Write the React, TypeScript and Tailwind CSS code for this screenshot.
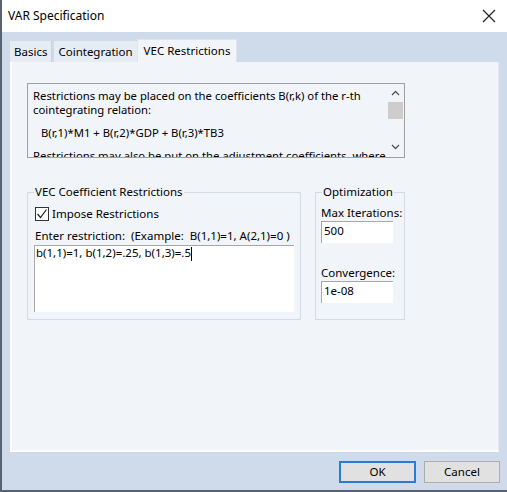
import React from "react";

export default function App() {
  const font = { fontFamily: '"Noto Sans", "DejaVu Sans", sans-serif' };
  return (
    <div className="w-[507px] h-[492px] bg-[#4a5260] p-0 overflow-hidden" style={font}>
      <div className="w-[507px] h-[492px] border-l-[2px] border-b-[2px] border-[#5a6272] bg-[#cfdbeb] flex flex-col text-[11.5px] text-black leading-none">
        {/* Title bar */}
        <div className="h-[32px] bg-white flex items-center justify-between pl-[6px] pr-[10px] shrink-0">
          <span className="text-[12px]">VAR Specification</span>
          <svg width="14" height="14" viewBox="0 0 14 14" className="mr-[1px]">
            <path d="M1 1 L13 13 M13 1 L1 13" stroke="#222" strokeWidth="1.2" />
          </svg>
        </div>
        {/* Tabs */}
        <div className="flex items-end pl-[8px] h-[30px] shrink-0">
          <div className="h-[21px] px-[4px] flex items-center bg-[#e6ecf4] border-r border-[#c8d2de]">Basics</div>
          <div className="h-[21px] px-[4px] ml-[2px] flex items-center bg-[#e6ecf4]">Cointegration</div>
          <div className="h-[23px] px-[6px] flex items-center bg-[#f1f4f9] border-t border-x border-[#dfe5ee]">VEC Restrictions</div>
        </div>
        <div className="mx-[8px] h-[390px] shrink-0 bg-[#f1f4f9] border-l-[2px] border-b-[2px] border-white border-r border-r-[#e4e9f0] pt-[21px] pl-[15px] pr-[91px]">
          {/* Scroll text */}
          <div className="w-[378px] h-[75px] border border-[#a0a0a0] bg-[#f1f4f9] flex overflow-hidden">
            <div className="flex-1 pl-[5px] pt-[5px] leading-[14px] overflow-hidden text-[11.3px] whitespace-nowrap">
              <div>Restrictions may be placed on the coefficients B(r,k) of the r-th</div>
              <div>cointegrating relation:</div>
              <div className="mt-[9px] pl-[8px]">B(r,1)*M1 + B(r,2)*GDP + B(r,3)*TB3</div>
              <div className="mt-[9px]">Restrictions may also be put on the adjustment coefficients, where</div>
            </div>
            <div className="w-[17px] flex flex-col items-center bg-[#f1f4f9]">
              <svg width="9" height="6" viewBox="0 0 9 6" className="mt-[6px]">
                <path d="M1 5 L4.5 1.5 L8 5" stroke="#555" strokeWidth="1.3" fill="none" />
              </svg>
              <div className="w-[15px] h-[17px] bg-[#cdcdcd] mt-[6px]" />
              <div className="flex-1" />
              <svg width="9" height="6" viewBox="0 0 9 6" className="mb-[7px]">
                <path d="M1 1 L4.5 4.5 L8 1" stroke="#555" strokeWidth="1.3" fill="none" />
              </svg>
            </div>
          </div>
          {/* groups */}
          <div className="flex mt-[34px] gap-[14px]">
            <div className="relative w-[274px] h-[128px] border border-[#d5dbe3] rounded-[1px] px-[6px] pt-[14px]">
              <span className="absolute left-[6px] -top-[7px] bg-[#f1f4f9] px-[1px]">VEC Coefficient Restrictions</span>
              <div className="flex items-center gap-[3px] ml-[1px]">
                <div className="w-[14px] h-[14px] border border-[#333] bg-white flex items-center justify-center">
                  <svg width="12" height="12" viewBox="0 0 12 12">
                    <path d="M1.5 6 L4.5 9.5 L10.5 1.5" stroke="#222" strokeWidth="1.2" fill="none" />
                  </svg>
                </div>
                <span>Impose Restrictions</span>
              </div>
              <div className="mt-[9px] ml-[1px] whitespace-nowrap">Enter restriction:&nbsp; (Example:&nbsp; B(1,1)=1, A(2,1)=0 )</div>
              <div className="mt-[3px] h-[67px] w-[260px] bg-white border-l border-t border-[#a8a8a8] pl-[1px] pt-[1px] flex items-start">
                <span>b(1,1)=1, b(1,2)=.25, b(1,3)=.5</span>
                <span className="w-px h-[14px] bg-black" />
              </div>
            </div>
            <div className="relative w-[90px] h-[128px] border border-[#d5dbe3] px-[5px] pt-[14px]">
              <span className="absolute left-[6px] -top-[7px] bg-[#f1f4f9] px-[1px]">Optimization</span>
              <div className="whitespace-nowrap">Max Iterations:</div>
              <div className="mt-[2px] w-[72px] h-[22px] bg-white border-l border-t border-[#a8a8a8] pl-[2px] pt-[3px]">500</div>
              <div className="mt-[24px] whitespace-nowrap">Convergence:</div>
              <div className="mt-[3px] w-[72px] h-[22px] bg-white border-l border-t border-[#a8a8a8] pl-[2px] pt-[3px]">1e-08</div>
            </div>
          </div>
        </div>
        {/* buttons */}
        <div className="flex justify-end gap-[8px] pr-[7px] pt-[9px]">
          <div className="w-[77px] h-[22px] border-2 border-[#2b7ad6] bg-[#e1e1e1] flex items-center justify-center">OK</div>
          <div className="w-[76px] h-[22px] border border-[#adadad] bg-[#e1e1e1] flex items-center justify-center">Cancel</div>
        </div>
      </div>
    </div>
  );
}
